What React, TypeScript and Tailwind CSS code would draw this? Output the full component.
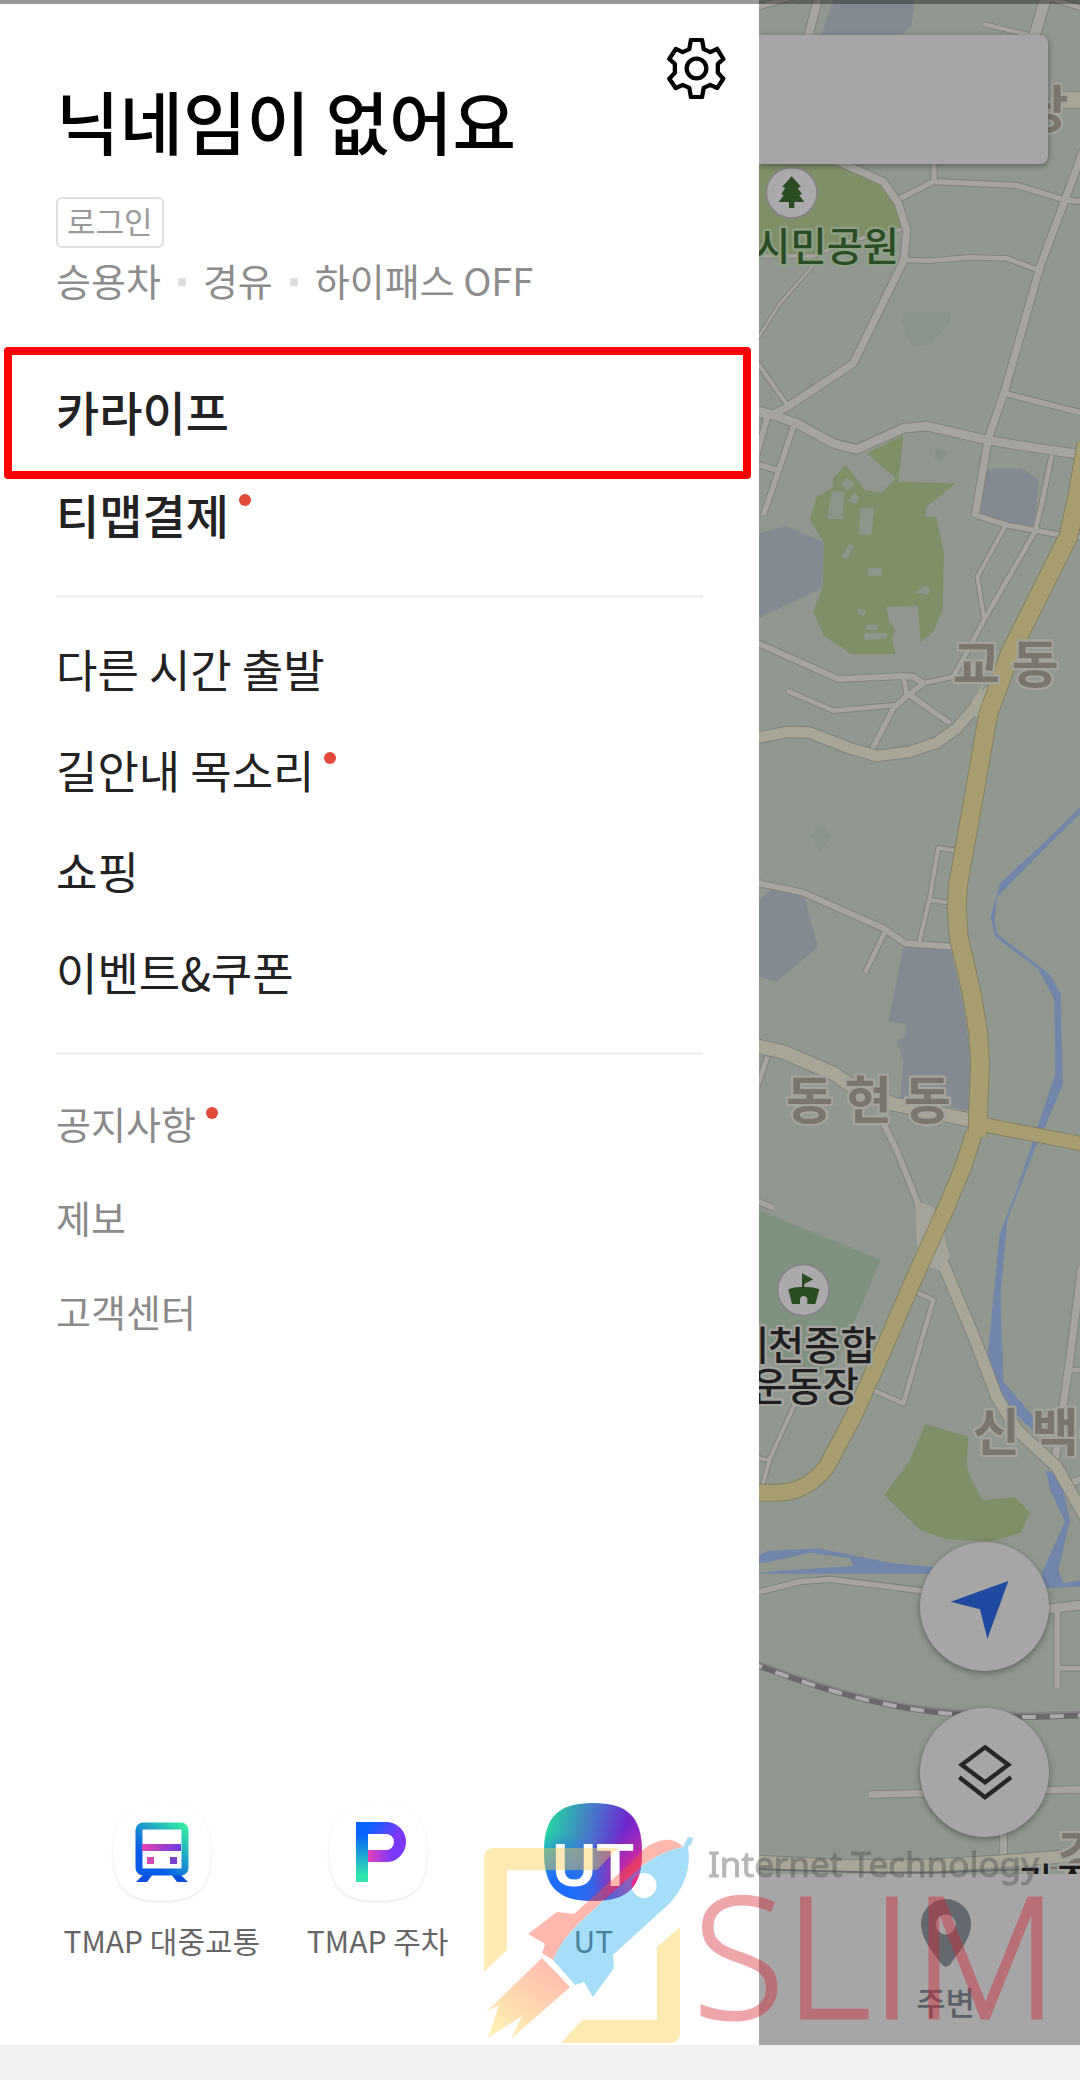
import React from "react";

type Road = { dy: number; d: string; w: number };

/* Map geometry: three units per pixel, split into vertical tiles offset by dy. */
const GREY_ROADS: Road[] = [
  { dy: 0, w: 18, d: "M20 22L150 -15" },
  { dy: 0, w: 26, d: "M208 -20L172 120" },
  { dy: 0, w: 14, d: "M700 72L850 108" },
  { dy: 0, w: 34, d: "M888 -10L850 120" },
  { dy: 0, w: 16, d: "M890 -8L1000 26" },
  { dy: 0, w: 24, d: "M1000 450L945 600L870 800L765 1170L715 1315L675 1550" },
  { dy: 0, w: 18, d: "M552 480V545L800 556L945 600L1000 605" },
  { dy: 0, w: 18, d: "M550 545L450 595" },
  { dy: 0, w: 24, d: "M255 480L400 545L445 610L470 690L462 780L310 1090L105 1225L60 1245L20 1240" },
  { dy: 0, w: 16, d: "M465 780L540 782L660 772L770 775L870 812" },
  { dy: 0, w: 10, d: "M20 1020L90 910L195 790" },
  { dy: 0, w: 14, d: "M20 1085L115 1220" },
  { dy: 0, w: 12, d: "M20 768L190 768L300 722L455 688" },
  { dy: 0, w: 18, d: "M765 1180L1000 1240" },
  { dy: 1200, w: 28, d: "M20 32L70 45L140 70L250 130L320 148L460 85L530 78L700 118L800 135L1000 165" },
  { dy: 1200, w: 18, d: "M130 80L85 215L40 345" },
  { dy: 1200, w: 20, d: "M52 50L20 165" },
  { dy: 1200, w: 18, d: "M20 192L85 212" },
  { dy: 1200, w: 18, d: "M675 345L770 375L850 390L945 408L1000 412" },
  { dy: 1200, w: 16, d: "M905 165L880 290L855 395L702 660L660 740L610 830L520 850" },
  { dy: 1200, w: 14, d: "M765 380L682 530L702 655" },
  { dy: 1200, w: 20, d: "M20 728L265 837L460 828L490 830L520 850" },
  { dy: 1200, w: 16, d: "M462 835L470 885L440 915L250 932L110 872" },
  { dy: 1200, w: 18, d: "M520 850L475 885L430 925L365 1050" },
  { dy: 1200, w: 18, d: "M480 885L600 970" },
  { dy: 2400, w: 20, d: "M20 248L160 278L400 385L465 430L610 440" },
  { dy: 2400, w: 16, d: "M405 395L345 518" },
  { dy: 2400, w: 14, d: "M620 152L565 143L540 290L508 425" },
  { dy: 2400, w: 14, d: "M535 300L600 308" },
  { dy: 2400, w: 16, d: "M52 770L22 860" },
  { dy: 2400, w: 20, d: "M400 970L440 1050L500 1200L520 1290" },
  { dy: 2400, w: 18, d: "M20 1203L72 1224" },
  { dy: 3600, w: 16, d: "M475 265L550 300L460 610L350 562" },
  { dy: 3600, w: 14, d: "M140 600L60 775L35 865" },
  { dy: 3600, w: 14, d: "M20 772L58 782" },
  { dy: 3600, w: 24, d: "M995 200L955 510L915 780" },
  { dy: 3600, w: 16, d: "M955 510H1000" },
  { dy: 3600, w: 22, d: "M960 850L1000 835" },
  { dy: 3600, w: 18, d: "M20 1178L150 1145L240 1138L530 1174" },
  { dy: 3600, w: 28, d: "M880 1228L1000 1214" },
  { dy: 3600, w: 20, d: "M922 1230V1465" },
  { dy: 4800, w: 16, d: "M930 205H1000" },
  { dy: 4800, w: 22, d: "M355 584L1000 568" },
  { dy: 4800, w: 24, d: "M760 690V775" },
];

const PALE_ROADS: Road[] = [
  { dy: 0, w: 50, d: "M920 300H1000" },
  { dy: 1200, w: 34, d: "M20 1014L110 996L180 998L300 1045L380 1068L480 1055L560 1028L620 985L720 870" },
  { dy: 2400, w: 42, d: "M20 738L100 756L250 820L330 875L430 912L660 960" },
  { dy: 3600, w: 36, d: "M545 110L600 240L680 430L740 590L800 690L920 800L1010 960" },
  { dy: 4800, w: 38, d: "M20 785L300 798L560 796L740 785L1000 765" },
];

const YELLOW_ROADS: Road[] = [
  { dy: 0, w: 42, d: "M680 3370L1000 3432" },
  {
    dy: 0,
    w: 50,
    d: "M672 3400L640 3500L590 3620L490 3840L400 4050L310 4250L230 4400Q170 4478 80 4478H20",
  },
  {
    dy: 0,
    w: 56,
    d: "M1010 1330L980 1500L955 1610L850 1820L780 1960L745 2060L715 2140L668 2410L625 2650L620 2720L626 2810L665 2980L685 3100L690 3190L682 3410",
  },
];

function Roads({ roads, fill, edge }: { roads: Road[]; fill: string; edge: string }) {
  return (
    <g fill="none" strokeLinejoin="round">
      {roads.map((r, i) => (
        <path key={`e${i}`} d={r.d} transform={`translate(0 ${r.dy})`} stroke={edge} strokeWidth={r.w + 3} />
      ))}
      {roads.map((r, i) => (
        <path key={`f${i}`} d={r.d} transform={`translate(0 ${r.dy})`} stroke={fill} strokeWidth={r.w - 2} />
      ))}
    </g>
  );
}

function MapCanvas() {
  return (
    <svg
      viewBox="27 0 963 5622"
      preserveAspectRatio="xMinYMin slice"
      className="absolute inset-0 h-full w-full bg-[#8f978e] font-['Noto_Sans_CJK_KR','Noto_Sans',sans-serif]"
      role="img"
      aria-label="지도"
    >
      <g fill="#838a91">
        <path d="M250 0H495L485 75L450 110H212Z" />
        <g transform="translate(0 1200)">
          <path d="M725 205H815L865 240L855 385L685 345L712 210Z" />
          <path d="M20 402L105 378L195 415L225 430L215 565L20 657Z" />
        </g>
        <g transform="translate(0 2400)">
          <path d="M20 305L75 262L165 295L203 440L80 545L20 528Z" />
          <path d="M460 440H600L640 620L660 760V930L450 900L460 780L440 720L467 710V672L415 665Z" />
        </g>
      </g>
      <g fill="#8a9389">
        <path d="M450 960L470 935H600V970L540 1035L485 1040Z" />
        <path d="M555 1340L595 1355L575 1385L555 1380Z" />
        <path d="M180 2505L215 2470L246 2510L210 2555Z" />
      </g>
      <path d="M20 3628L392 3780L320 3950L240 4130L20 4060Z" fill="#7f917f" />
      <g fill="#7f8f67">
        <path d="M20 480H255L400 550L450 640L460 690L350 710L200 770H20Z" />
        <path
          transform="translate(0 1200)"
          d="M460 105L445 245L618 250L530 320L525 350H558L582 460L578 630L550 695L512 725L503 618L410 620L418 665L437 690L425 715L437 762H305L222 708L190 635L218 560L222 430L180 360L200 290L248 265L250 235L288 195L345 270L395 278L437 235L350 160Z"
        />
        <path
          transform="translate(0 3600)"
          d="M525 672L655 710L650 800L670 850L698 900L795 892L840 938L812 998L720 1025L590 1018L510 990L403 885L480 780Z"
        />
      </g>
      <g fill="#8d968a" transform="translate(0 1200)">
        <path d="M290 233L315 252L292 272L272 252ZM245 272L283 275L278 358L232 356ZM310 278L330 290L318 312L296 302ZM330 324H373L364 404H328ZM298 432L313 436L292 476L275 470ZM355 504H396V527H352ZM495 576L530 556L542 572L532 586ZM325 625L350 635L338 650L322 640ZM350 674H386L380 690H346ZM343 700H414L405 716L343 720Z" />
      </g>
      <g fill="#7286ac">
        <path
          transform="translate(0 2400)"
          d="M1000 12L885 125L750 250L722 350L736 410L865 508L912 595L916 820L865 975L800 1170L765 1260L748 1310L712 1680L760 1810L850 1892V1850L760 1745L752 1480L772 1260L855 1045L885 980L938 855L932 580L900 525L870 500L742 402L733 360L742 290L905 125L1000 32Z"
        />
        <path
          transform="translate(0 3600)"
          d="M888 810L930 830L960 960L925 1110L940 1150L1000 1140V1160L880 1165L875 1120L945 965L900 870Z"
        />
        <path
          transform="translate(0 3600)"
          d="M20 1070L55 1052L200 1045L430 1090L560 1102V1121H20L80 1113L310 1098L300 1075L180 1058L60 1085L20 1092Z"
        />
      </g>
      <Roads roads={GREY_ROADS} fill="#a5a49e" edge="#7c7e78" />
      <Roads roads={PALE_ROADS} fill="#a7a697" edge="#7c7e78" />
      <path d="M495 3600L550 3622L584 3672L583 3710L600 3770L570 3812Q540 3795 505 3812Z" fill="#a5a49a" />
      <path d="M700 2050L685 2150L640 2145L620 2180Z" fill="#a7a697" />
      <Roads roads={YELLOW_ROADS} fill="#a79d70" edge="#807a5c" />
      <g fill="none" transform="translate(0 4800)">
        <path d="M20 185C200 255 420 320 620 332S850 340 1000 336" stroke="#858585" strokeWidth="8" />
        <path d="M20 195C200 265 420 330 620 342S850 352 1000 346" stroke="#686868" strokeWidth="17" />
        <path
          d="M20 195C200 265 420 330 620 342S850 352 1000 346"
          stroke="#aaaaaa"
          strokeWidth="12"
          strokeDasharray="42 42"
          strokeDashoffset="24"
        />
        <path d="M20 808L400 818L560 818L1000 800" stroke="#6a6a6a" strokeWidth="5" />
      </g>

      <g stroke="#858385" strokeWidth="5" fill="#aaa9ab">
        <circle cx="125" cy="578" r="76" />
        <circle cx="160" cy="3870" r="77" />
      </g>
      <g fill="#2c4b22">
        <path d="M125 529L153 560L143 564L156 582L148 586L163 606H133V624H117V606H86L101 586L94 582L106 564L97 560Z" />
        <path d="M156 3820L190 3838L163 3852V3861Q190 3860 208 3868L196 3912H172V3895Q161 3880 150 3895V3912H126L115 3868Q134 3860 156 3861Z" />
      </g>

      <g strokeLinejoin="round" paintOrder="stroke" strokeWidth="14" fontWeight="700">
        <g fill="#7a766e" stroke="#a3a29b" fontSize="154">
          <text x="955" y="383" textAnchor="end">당</text>
          <text x="608" y="2048">교 동</text>
          <text x="108" y="3356">동 현 동</text>
          <text x="668" y="4352">신 백동</text>
          <text x="925" y="5618">강</text>
        </g>
        <g fontSize="118" stroke="#a3a39d" fontWeight="500">
          <text x="447" y="782" textAnchor="end" fill="#2b4d26" stroke="#8ea084">시민공원</text>
          <text x="380" y="4079" textAnchor="end" fill="#1f1f1f">제천종합</text>
          <text x="327" y="4202" textAnchor="end" fill="#1f1f1f">운동장</text>
          <text x="805" y="5690" fill="#1a1a1a">가주</text>
        </g>
      </g>
    </svg>
  );
}

function Dot() {
  return <span className="mt-1 h-3 w-3 shrink-0 rounded-full bg-[#e2493b]" aria-label="새 소식" />;
}

function MenuItem({ label, dot, tone }: { label: string; dot?: boolean; tone: "strong" | "normal" | "muted" }) {
  const style =
    tone === "strong"
      ? "h-[103px] text-[47px] leading-[48px] font-medium text-[#222222]"
      : tone === "normal"
        ? "h-[101px] text-[45px] leading-[44px] font-normal text-[#222222]"
        : "h-[94px] text-[38px] leading-[40px] font-normal text-[#8a8a8a]";
  return (
    <li>
      <a href="#" className={`flex items-center px-14 ${style}`}>
        <span className="flex gap-2.5">
          {label}
          {dot && <Dot />}
        </span>
      </a>
    </li>
  );
}

const SQUIRCLE = "M49 0C84 0 98 14 98 49S84 98 49 98S0 84 0 49S14 0 49 0Z";

function TrainIcon() {
  return (
    <svg viewBox="0 0 98 98" className="h-[98px] w-[98px] overflow-visible" aria-hidden="true">
      <defs>
        <linearGradient id="train" x1="1" y1="0" x2="0.3" y2="0.8">
          <stop offset="0" stopColor="#35eba4" />
          <stop offset="1" stopColor="#085ce8" />
        </linearGradient>
        <linearGradient id="band" x1="0" x2="1">
          <stop offset="0" stopColor="#e844b0" />
          <stop offset="1" stopColor="#6a3ae0" />
        </linearGradient>
      </defs>
      <path d={SQUIRCLE} fill="#fff" className="drop-shadow-[0_1px_1px_rgba(0,0,0,0.12)]" />
      <path d="M31 71H40L34 79H23ZM67 71H58L64 79H75Z" fill="#0a50dc" />
      <rect x="26" y="23" width="46" height="46" rx="4" fill="#fff" stroke="url(#train)" strokeWidth="7" />
      <rect x="29" y="41" width="39" height="7" fill="url(#band)" />
      <rect x="34" y="54" width="7" height="7" fill="#d54bb0" />
      <rect x="57" y="54" width="7" height="7" fill="#7440cc" />
    </svg>
  );
}

function ParkingIcon() {
  return (
    <svg viewBox="0 0 98 98" className="h-[98px] w-[98px] overflow-visible" aria-hidden="true">
      <defs>
        <linearGradient id="stem" x1="0" y1="0" x2="0" y2="1">
          <stop offset="0.2" stopColor="#0763fb" />
          <stop offset="0.9" stopColor="#30e6ae" />
        </linearGradient>
        <linearGradient id="bowlTop" gradientUnits="userSpaceOnUse" x1="42" y1="20" x2="66" y2="36">
          <stop offset="0" stopColor="#0763fb" />
          <stop offset="1" stopColor="#7c38fa" />
        </linearGradient>
        <linearGradient id="bowlBottom" gradientUnits="userSpaceOnUse" x1="39" y1="50" x2="62" y2="50">
          <stop offset="0" stopColor="#e844b4" />
          <stop offset="1" stopColor="#7c38fa" />
        </linearGradient>
      </defs>
      <path d={SQUIRCLE} fill="#fff" className="drop-shadow-[0_1px_1px_rgba(0,0,0,0.12)]" />
      <path d="M39 53H57A14 14 0 0 0 71 39" fill="none" stroke="url(#bowlBottom)" strokeWidth="12" />
      <path d="M27 25H57A14 14 0 0 1 71 39V40" fill="none" stroke="url(#bowlTop)" strokeWidth="12" />
      <rect x="27" y="19" width="12" height="60" fill="url(#stem)" />
    </svg>
  );
}

function UtIcon() {
  return (
    <svg viewBox="0 0 98 98" className="h-[98px] w-[98px]" aria-hidden="true">
      <defs>
        <linearGradient id="ut" x1="0" y1="0.2" x2="1" y2="0.4">
          <stop offset="0" stopColor="#22dca0" />
          <stop offset="0.5" stopColor="#4a6fcc" />
          <stop offset="0.8" stopColor="#6e28cc" />
          <stop offset="1" stopColor="#9a28c8" />
        </linearGradient>
        <radialGradient id="utBlue" cx="0.15" cy="0.9" r="0.6">
          <stop offset="0.2" stopColor="#1c6cff" />
          <stop offset="1" stopColor="#1c6cff" stopOpacity="0" />
        </radialGradient>
        <radialGradient id="utPink" cx="1" cy="0.75" r="0.5">
          <stop offset="0" stopColor="#ff2e78" />
          <stop offset="1" stopColor="#d02aa0" stopOpacity="0" />
        </radialGradient>
      </defs>
      <path d={SQUIRCLE} fill="url(#ut)" />
      <path d={SQUIRCLE} fill="url(#utBlue)" />
      <path d={SQUIRCLE} fill="url(#utPink)" />
      <text x="49" y="83" textAnchor="middle" fontSize="61" fontWeight="700" fill="#fff" fontFamily="Liberation Sans, sans-serif">
        UT
      </text>
    </svg>
  );
}

const SHORTCUTS = [
  { label: "TMAP 대중교통", Icon: TrainIcon },
  { label: "TMAP 주차", Icon: ParkingIcon },
  { label: "UT", Icon: UtIcon },
];

function Drawer() {
  return (
    <aside className="flex w-[70.3%] shrink-0 flex-col border-t-4 border-[#999999] bg-white">
      <header className="pl-14 pr-8">
        <div className="flex items-start justify-between pt-[34px]">
          <h1 className="mt-[42px] text-[69px] font-medium leading-[80px] text-black">닉네임이 없어요</h1>
          <button type="button" aria-label="설정" className="h-[61px] w-[61px]">
            <svg viewBox="78 54 184 186" className="h-full w-full" fill="none" stroke="#000" strokeWidth="13" strokeLinejoin="round">
              <path d="M153 60H187L192 88L212 97L233 87L252 118L235 133V160L252 178L233 207L212 197L192 206L187 234H153L148 206L128 197L107 207L87 178L104 160V133L87 118L107 87L128 97L148 88Z" />
              <circle cx="170" cy="147" r="30" />
            </svg>
          </button>
        </div>
        <button
          type="button"
          className="mt-[37px] flex h-[51px] items-center rounded-md border-2 border-[#e0e0e0] px-[9px] pb-1 text-[31px] leading-[40px] text-[#999999]"
        >
          로그인
        </button>
        <p className="mt-[10px] flex items-center gap-[17px] text-[38px] leading-[44px] text-[#8c8c8c]">
          <span>승용차</span>
          <i className="mt-1 h-2 w-2 bg-[#dedede]" />
          <span>경유</span>
          <i className="mt-1 h-2 w-2 bg-[#dedede]" />
          <span>하이패스 OFF</span>
        </p>
      </header>

      <nav aria-label="메뉴" className="mt-[57px]">
        <ul className="relative">
          <MenuItem label="카라이프" tone="strong" />
          <MenuItem label="티맵결제" tone="strong" dot />
          <li aria-hidden="true" className="pointer-events-none absolute -top-3 left-1 right-2 h-[132px] rounded border-8 border-[#ff0000]" />
        </ul>
        <hr className="mx-14 mt-[30px] border-t-[3px] border-[#f1f1f1]" />
        <ul className="mt-5">
          <MenuItem label="다른 시간 출발" tone="normal" />
          <MenuItem label="길안내 목소리" tone="normal" dot />
          <MenuItem label="쇼핑" tone="normal" />
          <MenuItem label="이벤트&쿠폰" tone="normal" />
        </ul>
        <hr className="mx-14 mt-[30px] border-t-[3px] border-[#f1f1f1]" />
        <ul className="mt-[21px]">
          <MenuItem label="공지사항" tone="muted" dot />
          <MenuItem label="제보" tone="muted" />
          <MenuItem label="고객센터" tone="muted" />
        </ul>
      </nav>

      <ul className="mt-auto grid grid-cols-3 pb-[85px] pl-[54px] pr-[58px]">
        {SHORTCUTS.map(({ label, Icon }) => (
          <li key={label}>
            <a href="#" className="flex flex-col items-center gap-[19px] whitespace-nowrap text-[30px] leading-[40px] text-[#666666]">
              <Icon />
              {label}
            </a>
          </li>
        ))}
      </ul>
    </aside>
  );
}

function MapPane() {
  return (
    <section className="flex min-w-0 flex-1 flex-col">
      <div className="relative flex-1 overflow-hidden">
        <MapCanvas />
        <div className="absolute inset-x-0 top-0 h-1 bg-black/35" />
        <input
          type="search"
          aria-label="장소 검색"
          className="absolute left-0 right-8 top-[35px] h-[129px] rounded-r-lg bg-[#a6a6a6] shadow-[0_2px_6px_rgba(0,0,0,0.35)] outline-none"
        />
        <div className="absolute bottom-[37px] right-[31px] flex flex-col gap-[37px]">
          <button type="button" aria-label="현재 위치" className="h-[129px] w-[129px] rounded-full bg-[#a6a6a6] shadow-[0_2px_6px_rgba(0,0,0,0.35)]">
            <svg viewBox="508 1026 387 387" className="h-full w-full" aria-hidden="true">
              <path d="M600 1205L773 1143L710 1317L688 1228Z" fill="#1f4a9f" />
            </svg>
          </button>
          <button type="button" aria-label="지도 레이어" className="h-[129px] w-[129px] rounded-full bg-[#a6a6a6] shadow-[0_2px_6px_rgba(0,0,0,0.35)]">
            <svg viewBox="508 323 387 387" className="h-full w-full" fill="none" stroke="#262626" strokeWidth="13" aria-hidden="true">
              <path d="M703 441L773 493L703 546L633 493Z" />
              <path d="M626 531L703 591L781 531" />
            </svg>
          </button>
        </div>
      </div>
      <nav aria-label="하단 메뉴" className="relative flex h-[171px] justify-center bg-[#a6a6a6] pl-[52px]">
        <a href="#" className="flex flex-col items-center pt-[25px] text-[32px] leading-[40px] text-[#5c6167]">
          <svg viewBox="514 898 151 205" className="h-[68px] w-[50px]" aria-hidden="true">
            <path d="M589 898A75 75 0 0 1 665 974C665 1020 625 1060 603 1095Q589 1110 576 1095C553 1060 514 1020 514 974A75 75 0 0 1 589 898Z" fill="#64696f" />
            <circle cx="589" cy="975" r="30" fill="#a6a6a6" />
          </svg>
          <span className="mt-3.5 font-medium">주변</span>
        </a>
      </nav>
    </section>
  );
}

function Watermark() {
  return (
    <svg
      viewBox="480 1825 600 220"
      className="pointer-events-none absolute bottom-[35px] right-0 h-[220px] w-[600px] opacity-40"
      role="img"
      aria-label="Internet Technology SLIM"
    >
      <defs>
        <linearGradient id="flame" x1="0.8" y1="0.1" x2="0.2" y2="0.9">
          <stop offset="0" stopColor="#ff5a35" />
          <stop offset="1" stopColor="#ffd545" />
        </linearGradient>
      </defs>
      <g fill="#ffcd47">
        <path d="M484 1972V1858Q484 1848 494 1848H618L597 1870H507V1950Z" />
        <path d="M680 1927V2033Q680 2043 670 2043H561L582 2020H657V1947Z" />
      </g>
      <path
        d="M683 1847C673 1836 661 1840 654 1843C644 1847 640 1853 634 1860L574 1914L557 1912L528 1934L545 1944L542 1953L553 1960Q560 1942 579 1923L634 1873Q655 1853 683 1847Z"
        fill="#ff4f2f"
      />
      <path
        fillRule="evenodd"
        d="M683 1847L688 1837L693 1838L692 1843L688 1847C692 1870 682 1890 670 1903L613 1955L614 1968L593 1997L584 1982L575 1985L553 1960Q560 1942 579 1923L634 1873Q655 1853 683 1847ZM644 1873A12.500 12.500 0 1 0 644 1898A12.500 12.500 0 1 0 644 1873Z"
        fill="#22abef"
      />
      <path d="M542 1958L570 1987L511 2039L522 2016L488 2038L499 2005L486 2012Z" fill="url(#flame)" />
      <text x="708" y="1877" fontSize="35" fill="#4c4c4c" stroke="#4c4c4c" strokeWidth="1" fontFamily="Noto Sans, sans-serif">
        Internet Technology
      </text>
      <text x="693" y="2018" fontSize="168" fontWeight="300" fill="#d52230" stroke="#d52230" strokeWidth="3" fontFamily="Open Sans, sans-serif">
        SLIM
      </text>
    </svg>
  );
}

export default function App() {
  return (
    <main className="relative flex min-h-screen flex-col overflow-hidden bg-[#f1f1f1] font-['Noto_Sans_CJK_KR','Noto_Sans',sans-serif]">
      <div className="flex flex-1 items-stretch">
        <Drawer />
        <MapPane />
      </div>
      <Watermark />
      <footer className="h-[35px]" />
    </main>
  );
}
